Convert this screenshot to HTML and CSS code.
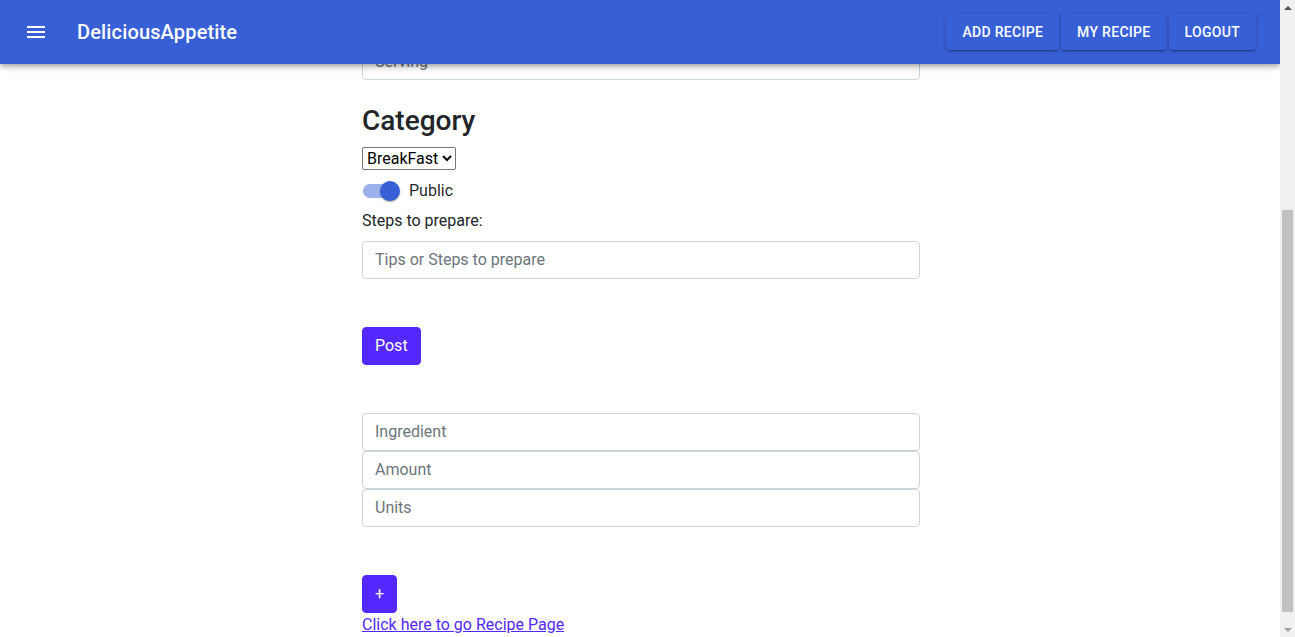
FILE: index.html
```html
<!DOCTYPE html>
<html lang="en">
<head>
<meta charset="utf-8">
<title>DeliciousAppetite</title>
<link rel="stylesheet" href="styles.css">
</head>
<body>
<div class="window">
  <div class="viewport">
    <header class="appbar">
      <div class="toolbar">
        <button class="icon-btn" aria-label="menu">
          <svg viewBox="0 0 24 24" width="24" height="24"><path fill="#fff" d="M3 18h18v-2H3v2zm0-5h18v-2H3v2zm0-7v2h18V6H3z"/></svg>
        </button>
        <div class="brand">DeliciousAppetite</div>
        <nav class="actions">
          <button class="bar-btn">Add Recipe</button>
          <button class="bar-btn">My Recipe</button>
          <button class="bar-btn">Logout</button>
        </nav>
      </div>
    </header>
    <main class="page">
      <form class="recipe-form">
        <input class="field" type="text" placeholder="Serving">
        <h3 class="section-title">Category</h3>
        <select class="category">
          <option>BreakFast</option>
          <option>Lunch</option>
          <option>Dinner</option>
        </select>
        <label class="switch-row">
          <span class="switch"><span class="track"></span><span class="thumb"></span></span>
          <span class="switch-label">Public</span>
        </label>
        <label class="steps-label">Steps to prepare:</label>
        <input class="field" type="text" placeholder="Tips or Steps to prepare">
        <button type="button" class="btn-primary post-btn">Post</button>
        <div class="ingredients">
          <input class="field" type="text" placeholder="Ingredient">
          <input class="field" type="text" placeholder="Amount">
          <input class="field" type="text" placeholder="Units">
        </div>
        <button type="button" class="btn-primary add-btn">+</button>
        <a class="recipe-link" href="#">Click here to go Recipe Page</a>
      </form>
    </main>
  </div>
  <div class="scrollbar" aria-hidden="true">
    <span class="arrow arrow-up"></span>
    <div class="scroll-track"><div class="scroll-thumb"></div></div>
    <span class="arrow arrow-down"></span>
  </div>
</div>
</body>
</html>
```

FILE: styles.css
```css
* { box-sizing: border-box; }

body {
  margin: 0;
  font-family: Roboto, "Liberation Sans", Arial, sans-serif;
  font-size: 16px;
  line-height: 1.5;
  color: #212529;
  background: #fff;
}

.window {
  display: flex;
  height: 100vh;
  overflow: hidden;
}

.viewport {
  position: relative;
  flex: 1;
  overflow: hidden;
}

.appbar {
  position: absolute;
  top: 0;
  left: 0;
  right: 0;
  z-index: 10;
  background: #375fd6;
  color: #fff;
  box-shadow: 0 2px 4px -1px rgba(0,0,0,0.2), 0 4px 5px 0 rgba(0,0,0,0.14), 0 1px 10px 0 rgba(0,0,0,0.12);
}

.toolbar {
  display: flex;
  align-items: center;
  height: 64px;
  padding: 0 24px;
}

.icon-btn {
  display: flex;
  align-items: center;
  justify-content: center;
  margin-left: -12px;
  margin-right: 17px;
  padding: 12px;
  border: 0;
  background: transparent;
  border-radius: 50%;
  cursor: pointer;
}

.icon-btn svg { display: block; }

.brand {
  flex: 1;
  font-size: 20px;
  font-weight: 500;
  letter-spacing: 0.15px;
  line-height: 1.6;
}

.actions {
  display: flex;
  gap: 2px;
}

.bar-btn {
  font-family: Roboto, "Liberation Sans", Arial, sans-serif;
  font-size: 14px;
  font-weight: 500;
  letter-spacing: 0.3px;
  line-height: 1.75;
  text-transform: uppercase;
  color: #fff;
  background: #375fd6;
  border: 0;
  border-radius: 4px;
  padding: 6px 16px;
  box-shadow: 0 3px 1px -2px rgba(0,0,0,0.2), 0 2px 2px 0 rgba(0,0,0,0.14), 0 1px 5px 0 rgba(0,0,0,0.12);
  cursor: pointer;
}

.page {
  padding-top: 42px;
}

.recipe-form {
  width: 560px;
  margin: 0 auto;
  padding-left: 2px;
}

.field {
  display: block;
  width: 100%;
  height: 38px;
  padding: 6px 12px;
  font-family: inherit;
  font-size: 16px;
  line-height: 1.5;
  color: #212529;
  background: #fff;
  border: 1px solid #ced4da;
  border-radius: 4px;
}

.field::placeholder { color: #6c757d; }

.section-title {
  margin: 24px 0 9px;
  font-size: 28px;
  font-weight: 500;
  line-height: 1.2;
  color: #212529;
}

.category {
  display: block;
  font-family: inherit;
  font-size: 16px;
  color: #000;
}

.switch-row {
  display: flex;
  align-items: center;
  height: 38px;
  margin-top: 2px;
  cursor: pointer;
}

.switch {
  position: relative;
  width: 47px;
  height: 38px;
  flex: none;
}

.track {
  position: absolute;
  left: 1px;
  top: 12px;
  width: 34px;
  height: 14px;
  border-radius: 7px;
  background: #9bafea;
}

.thumb {
  position: absolute;
  left: 18px;
  top: 9px;
  width: 20px;
  height: 20px;
  border-radius: 50%;
  background: #375fd6;
  box-shadow: 0 2px 1px -1px rgba(0,0,0,0.2), 0 1px 1px 0 rgba(0,0,0,0.14), 0 1px 3px 0 rgba(0,0,0,0.12);
}

.switch-label {
  color: rgba(0,0,0,0.87);
}

.steps-label {
  display: block;
  margin-top: -1px;
  margin-bottom: 8px;
}

.btn-primary {
  display: block;
  font-family: inherit;
  font-size: 16px;
  line-height: 1.5;
  color: #fff;
  background: #5429ff;
  border: 1px solid #5429ff;
  border-radius: 4px;
  padding: 6px 12px;
  cursor: pointer;
}

.post-btn { margin-top: 48px; }

.ingredients { margin-top: 48px; }

.add-btn {
  margin-top: 48px;
  width: 35px;
  padding: 6px 0;
  text-align: center;
}

.recipe-link {
  color: #5429ff;
  text-decoration: underline;
}

/* fake browser scrollbar (page is shown scrolled to the bottom) */
.scrollbar {
  display: flex;
  flex-direction: column;
  width: 15px;
  flex: none;
  background: #f1f1f1;
}

.arrow {
  display: flex;
  align-items: center;
  justify-content: center;
  height: 15px;
  flex: none;
}

.arrow::before {
  content: "";
  width: 0;
  height: 0;
  border-left: 4px solid transparent;
  border-right: 4px solid transparent;
}

.arrow-up::before { border-bottom: 4px solid #505050; }

.arrow-down::before { border-top: 4px solid #a3a3a3; }

.scroll-track {
  flex: 1;
  padding: 195px 2px 10px;
}

.scroll-thumb {
  height: 100%;
  background: #c1c1c1;
}
```
